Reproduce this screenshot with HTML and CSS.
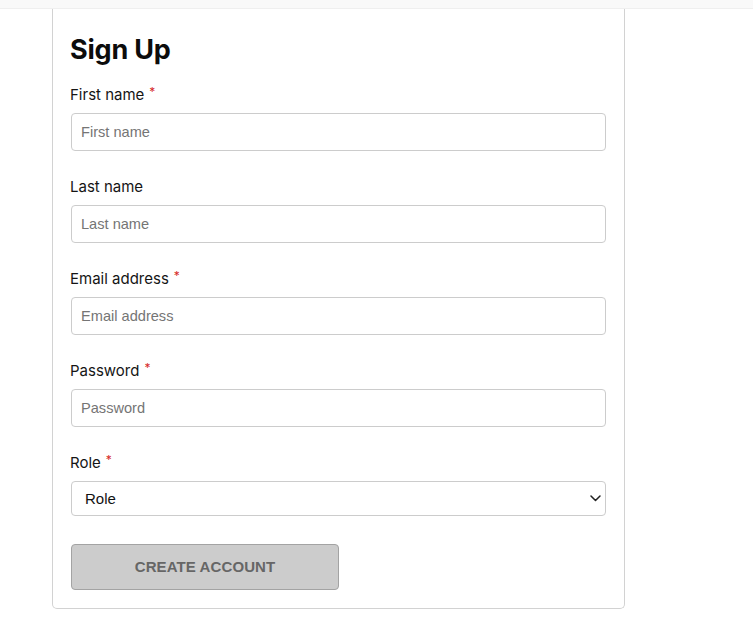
FILE: index.html
```html
<!DOCTYPE html>
<html lang="en">
<head>
<meta charset="utf-8">
<title>Sign Up</title>
<link rel="stylesheet" href="styles.css">
</head>
<body>
<div class="topbar"></div>
<div class="card">
  <h1 class="title">Sign Up</h1>
  <form class="form">
    <div class="field">
      <label class="label">First name<span class="req">*</span></label>
      <input class="input" type="text" placeholder="First name">
    </div>
    <div class="field">
      <label class="label">Last name</label>
      <input class="input" type="text" placeholder="Last name">
    </div>
    <div class="field">
      <label class="label">Email address<span class="req">*</span></label>
      <input class="input" type="email" placeholder="Email address">
    </div>
    <div class="field">
      <label class="label">Password<span class="req">*</span></label>
      <input class="input" type="password" placeholder="Password">
    </div>
    <div class="field">
      <label class="label">Role<span class="req">*</span></label>
      <div class="select-wrap">
        <select class="select">
          <option>Role</option>
        </select>
        <svg class="chevron" width="11" height="7" viewBox="0 0 11 7"><path d="M1 1l4.5 4.5L10 1" fill="none" stroke="#222" stroke-width="1.5" stroke-linecap="round" stroke-linejoin="round"/></svg>
      </div>
    </div>
    <button class="button" type="button" disabled>CREATE ACCOUNT</button>
  </form>
</div>
</body>
</html>
```

FILE: styles.css
```css
* { box-sizing: border-box; }

body {
  margin: 0;
  background: #ffffff;
  font-family: Inter, "Noto Sans", sans-serif;
  color: #111;
}

.topbar {
  height: 9px;
  background: #f9f9f9;
  border-bottom: 1px solid #efefef;
}

.card {
  margin-left: 52px;
  width: 573px;
  border: 1px solid #d2d2d2;
  border-top: none;
  border-radius: 0 0 5px 5px;
  padding: 25px 18px 18px 18px;
}

.title {
  margin: 0 0 19px -1px;
  font-size: 27px;
  line-height: 32px;
  font-weight: 700;
  color: #0c0c0c;
  letter-spacing: -0.2px;
}

.form {
  display: flex;
  flex-direction: column;
}

.field {
  display: flex;
  flex-direction: column;
  margin-bottom: 26px;
}

.label {
  font-size: 15px;
  line-height: 20px;
  color: #151515;
  margin: 0 0 8px -1px;
}

.req {
  color: #d62828;
  font-size: 12px;
  margin-left: 5px;
  vertical-align: 4px;
  line-height: 0;
}

.input {
  height: 38px;
  width: 100%;
  border: 1px solid #cccccc;
  border-radius: 4px;
  padding: 0 9px;
  font-family: "Liberation Sans", Arial, sans-serif;
  font-size: 14.6px;
  color: #222;
  background: #fff;
  outline: none;
}

.input::placeholder {
  color: #757575;
}

.select-wrap {
  position: relative;
}

.select {
  appearance: none;
  -webkit-appearance: none;
  width: 100%;
  height: 35px;
  border: 1px solid #cccccc;
  border-radius: 4px;
  padding: 0 13px;
  font-family: "Liberation Sans", Arial, sans-serif;
  font-size: 15px;
  color: #111;
  background: #fff;
  outline: none;
}

.chevron {
  position: absolute;
  right: 5px;
  top: 14px;
}

.button {
  margin-top: 2px;
  width: 268px;
  height: 46px;
  background: #cccccc;
  border: 1px solid #a3a3a3;
  border-radius: 4px;
  padding: 0 0 2px 0;
  font-family: "Liberation Sans", Arial, sans-serif;
  font-size: 15px;
  font-weight: 700;
  color: #666666;
  letter-spacing: 0.1px;
}
```
